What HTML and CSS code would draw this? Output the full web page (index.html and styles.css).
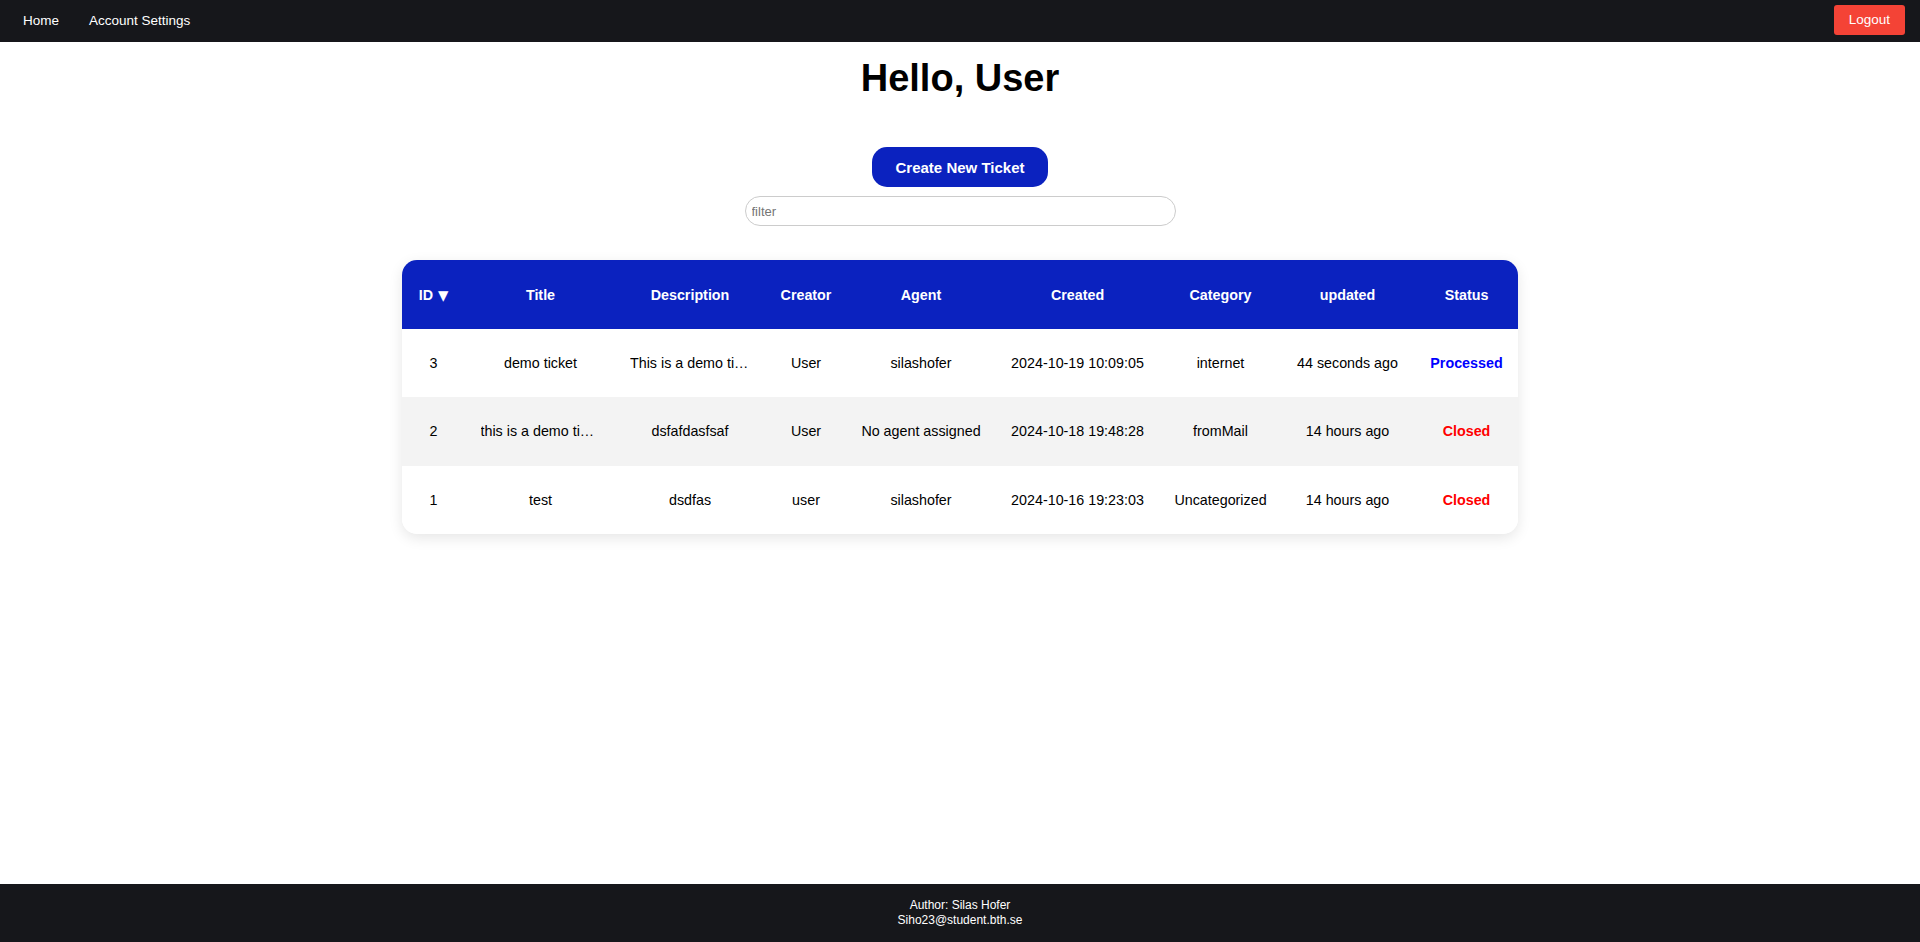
FILE: index.html
```html
<!DOCTYPE html>
<html lang="en">
<head>
<meta charset="utf-8">
<title>Tickets</title>
<link rel="stylesheet" href="styles.css">
</head>
<body>
<div class="page">
  <nav class="topnav">
    <div class="nav-links">
      <a class="nav-link" href="#">Home</a>
      <a class="nav-link" href="#">Account Settings</a>
    </div>
    <button class="logout">Logout</button>
  </nav>

  <main class="content">
    <h1 class="greeting">Hello, User</h1>
    <button class="create-btn">Create New Ticket</button>
    <input class="filter" type="text" placeholder="filter">

    <div class="table-card">
      <table class="tickets">
        <colgroup>
          <col class="c-id"><col class="c-title"><col class="c-desc"><col class="c-creator"><col class="c-agent"><col class="c-created"><col class="c-cat"><col class="c-upd"><col class="c-status">
        </colgroup>
        <thead>
          <tr>
            <th>ID <span class="sort">▼</span></th>
            <th>Title</th>
            <th>Description</th>
            <th>Creator</th>
            <th>Agent</th>
            <th>Created</th>
            <th>Category</th>
            <th>updated</th>
            <th>Status</th>
          </tr>
        </thead>
        <tbody>
          <tr>
            <td>3</td>
            <td><div class="trunc">demo ticket</div></td>
            <td><div class="trunc">This is a demo ticket</div></td>
            <td>User</td>
            <td>silashofer</td>
            <td>2024-10-19 10:09:05</td>
            <td>internet</td>
            <td>44 seconds ago</td>
            <td class="st st-processed">Processed</td>
          </tr>
          <tr class="alt">
            <td>2</td>
            <td><div class="trunc">this is a demo ticket from mail</div></td>
            <td><div class="trunc">dsfafdasfsaf</div></td>
            <td>User</td>
            <td>No agent assigned</td>
            <td>2024-10-18 19:48:28</td>
            <td>fromMail</td>
            <td>14 hours ago</td>
            <td class="st st-closed">Closed</td>
          </tr>
          <tr>
            <td>1</td>
            <td><div class="trunc">test</div></td>
            <td><div class="trunc">dsdfas</div></td>
            <td>user</td>
            <td>silashofer</td>
            <td>2024-10-16 19:23:03</td>
            <td>Uncategorized</td>
            <td>14 hours ago</td>
            <td class="st st-closed">Closed</td>
          </tr>
        </tbody>
      </table>
    </div>
  </main>

  <footer class="footer">
    <div>Author: Silas Hofer</div>
    <div>Siho23@student.bth.se</div>
  </footer>
</div>
</body>
</html>
```

FILE: styles.css
```css
* { box-sizing: border-box; }

html, body {
  margin: 0;
  padding: 0;
}

body {
  font-family: "Liberation Sans", Arial, sans-serif;
  color: #000;
  background: #fff;
}

.page {
  min-height: 100vh;
  display: flex;
  flex-direction: column;
}

/* top navigation */
.topnav {
  height: 42px;
  background: #16171b;
  display: flex;
  justify-content: space-between;
  align-items: flex-start;
  padding: 0 15px 0 8px;
}

.nav-links {
  display: flex;
  height: 41px;
  align-items: center;
}

.nav-link {
  color: #fff;
  text-decoration: none;
  font-size: 13.5px;
  padding: 0 15px;
}

.logout {
  margin-top: 5px;
  background: #f44336;
  color: #fff;
  border: none;
  border-radius: 3px;
  font-family: "Liberation Sans", Arial, sans-serif;
  font-size: 13.5px;
  line-height: 16px;
  padding: 7px 15px;
  height: 30px;
}

/* main content */
.content {
  flex: 1;
  display: flex;
  flex-direction: column;
  align-items: center;
}

.greeting {
  margin: 14px 0 0;
  font-size: 38px;
  font-weight: bold;
  line-height: 44px;
}

.create-btn {
  margin-top: 47px;
  background: #0b22bf;
  color: #fff;
  border: none;
  border-radius: 15px;
  font-family: "Liberation Sans", Arial, sans-serif;
  font-weight: bold;
  font-size: 15px;
  line-height: 17px;
  padding: 11px 24px;
  height: 40px;
}

.filter {
  margin-top: 9px;
  width: 431px;
  height: 30px;
  border: 1px solid #cccccc;
  border-radius: 15px;
  padding: 0 6px;
  font-family: "Liberation Sans", Arial, sans-serif;
  font-size: 13px;
  color: #000;
  outline: none;
}

.filter::placeholder {
  color: #757575;
}

/* table */
.table-card {
  margin-top: 34px;
  width: 1116px;
  border-radius: 15px;
  overflow: hidden;
  box-shadow: 0 4px 14px rgba(0, 0, 0, 0.1);
  background: #fff;
}

.tickets {
  width: 100%;
  border-collapse: collapse;
  table-layout: fixed;
  font-size: 14.3px;
}

.c-id { width: 63px; }
.c-title { width: 151px; }
.c-desc { width: 148px; }
.c-creator { width: 84px; }
.c-agent { width: 146px; }
.c-created { width: 167px; }
.c-cat { width: 119px; }
.c-upd { width: 135px; }
.c-status { width: 103px; }

.tickets th,
.tickets td {
  padding: 0;
  text-align: center;
  vertical-align: middle;
  white-space: nowrap;
}

.tickets thead tr {
  height: 69px;
  background: #0b22bf;
}

.tickets th {
  color: #fff;
  font-weight: bold;
}

.sort {
  font-family: "DejaVu Sans", sans-serif;
  font-size: 13.5px;
  margin-left: 1px;
}

.tickets tbody tr {
  height: 68.3px;
  background: #fff;
}

.tickets tbody tr.alt {
  background: #f3f3f3;
}

.trunc {
  max-width: 120px;
  margin: 0 auto;
  overflow: hidden;
  text-overflow: ellipsis;
  white-space: nowrap;
}

.st {
  font-weight: bold;
}

.st-processed { color: #0000ff; }
.st-closed { color: #ff0000; }

/* footer */
.footer {
  background: #16171b;
  color: #fff;
  text-align: center;
  font-size: 12px;
  line-height: 15px;
  padding: 14px 0;
  height: 58px;
}
```
